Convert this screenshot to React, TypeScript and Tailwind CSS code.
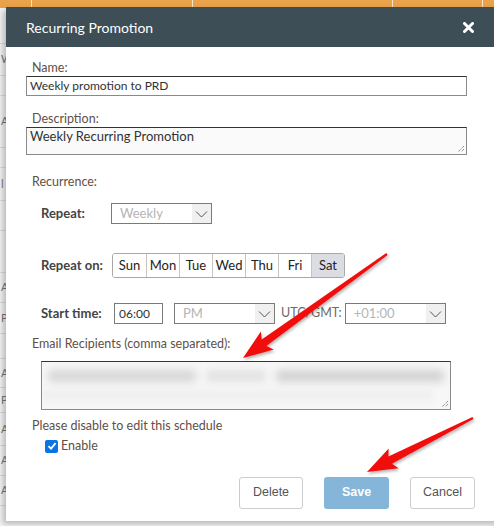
import React from 'react'

const font = { fontFamily: 'Lato, "Noto Sans", sans-serif' }

const DAYS = ['Sun', 'Mon', 'Tue', 'Wed', 'Thu', 'Fri', 'Sat']

// Rows of the grid sitting behind the dialog
const BG_ROWS = [
  { h: 36, t: '' },
  { h: 32, t: 'W' },
  { h: 20, t: '' },
  { h: 52, t: 'AI' },
  { h: 20, t: '' },
  { h: 33, t: 'l' },
  { h: 30, t: '' },
  { h: 42, t: '' },
  { h: 30, t: 'AI' },
  { h: 31, t: 'PI' },
  { h: 25, t: '' },
  { h: 29, t: 'AI' },
  { h: 25, t: 'PI' },
  { h: 33, t: 'AI' },
  { h: 30, t: 'AI' },
  { h: 30, t: 'AI' },
]

function Chevron() {
  return (
    <svg width="13" height="8" viewBox="0 0 13 8" fill="none">
      <path d="M1 1.5 L6.5 7 L12 1.5" stroke="#555" strokeWidth="1" />
    </svg>
  )
}

function Select({ value, width }: { value: string; width: string }) {
  return (
    <div className={`flex h-[21px] ${width} border border-[#7a7a7a] bg-white`}>
      <span className="flex-1 pl-[8px] text-[13px] leading-[19px] text-[#b5b5b5]">{value}</span>
      <span className="flex w-[19px] items-center justify-center bg-[#f0f0f0]">
        <Chevron />
      </span>
    </div>
  )
}

function Arrow({ tail, tip }: { tail: [number, number]; tip: [number, number] }) {
  const dx = tip[0] - tail[0]
  const dy = tip[1] - tail[1]
  const len = Math.hypot(dx, dy)
  const ux = dx / len
  const uy = dy / len
  const nx = -uy
  const ny = ux
  const headLen = 30
  const bx = tip[0] - ux * headLen
  const by = tip[1] - uy * headLen
  const p = (x: number, y: number) => `${x.toFixed(1)},${y.toFixed(1)}`
  const pts = [
    p(tail[0] + nx * 1.2, tail[1] + ny * 1.2),
    p(bx + ux * 4 + nx * 4, by + uy * 4 + ny * 4),
    p(bx + nx * 11, by + ny * 11),
    p(tip[0], tip[1]),
    p(bx - nx * 11, by - ny * 11),
    p(bx + ux * 4 - nx * 4, by + uy * 4 - ny * 4),
    p(tail[0] - nx * 1.2, tail[1] - ny * 1.2),
  ].join(' ')
  return <polygon points={pts} fill="#f20d0d" />
}

export default function App() {
  return (
    <div className="relative h-[526px] w-[494px] overflow-hidden bg-[#f4f4f4]" style={font}>
      {/* grid behind the dialog */}
      <div className="flex h-[8px] bg-[#eaa34a]">
        <div className="w-[32px] border-r border-white/70" />
        <div className="w-[161px] border-r border-white/70" />
        <div className="w-[200px] border-r border-white/70" />
        <div className="w-[90px] border-r border-white/70" />
      </div>
      <div className="flex flex-col">
        {BG_ROWS.map((r, i) => (
          <div
            key={i}
            className="flex items-center border-b border-[#dcdcdc] pl-[1px] text-[11px] text-[#777]"
            style={{ height: r.h }}
          >
            {r.t}
          </div>
        ))}
      </div>

      {/* dialog */}
      <div className="absolute left-[6px] top-[7px] h-[514px] w-[500px] bg-white shadow-[-3px_3px_6px_rgba(0,0,0,0.25)]">
        <div className="flex h-[40px] items-center justify-between bg-[#3d4e57] pl-[20px] pr-[32px]">
          <span className="text-[14px] text-white">Recurring Promotion</span>
          <svg width="11" height="11" viewBox="0 0 11 11">
            <path d="M1.5 1.5 L9.5 9.5 M9.5 1.5 L1.5 9.5" stroke="#fff" strokeWidth="3" strokeLinecap="round" />
          </svg>
        </div>

        <div className="flex w-[441px] flex-col pl-[20px] text-[#5f5046]">
          <label className="ml-[6px] mt-[14px] h-[14px] text-[12.5px] leading-[14px]">Name:</label>
          <div className="mt-[1px] h-[20px] w-[441px] border border-[#8a8a8a] border-t-[#333] pl-[3px] text-[12px] leading-[18px] text-[#333]">
            Weekly promotion to PRD
          </div>

          <label className="ml-[6px] mt-[16px] h-[14px] text-[12.5px] leading-[14px]">Description:</label>
          <div className="relative mt-[1px] h-[28px] w-[441px] border border-[#8a8a8a] border-t-[#333] bg-[#fafafa] pl-[3px] text-[13px] leading-[16px] text-[#333]">
            Weekly Recurring Promotion
            <svg className="absolute bottom-[1px] right-[1px]" width="9" height="9" viewBox="0 0 9 9">
              <path d="M8 2 L2 8 M8 5 L5 8" stroke="#666" strokeWidth="1" strokeDasharray="1 1" />
            </svg>
          </div>

          <label className="ml-[6px] mt-[20px] h-[14px] text-[12.5px] leading-[14px]">Recurrence:</label>

          <div className="ml-[15px] mt-[14px] flex items-center">
            <span className="w-[70px] text-[13px] font-bold text-[#444]">Repeat:</span>
            <Select value="Weekly" width="w-[101px]" />
          </div>

          <div className="ml-[15px] mt-[29px] flex items-center">
            <span className="w-[71px] text-[13px] font-bold text-[#444]">Repeat on:</span>
            <div className="flex h-[25px] overflow-hidden rounded-[3px] border border-[#a8a8a8]">
              {DAYS.map((d, i) => (
                <span
                  key={d}
                  className={`flex w-[33px] items-center justify-center text-[13px] text-[#222] ${
                    i > 0 ? 'border-l border-[#c4c4c4]' : ''
                  } ${d === 'Sat' ? 'bg-[#dcdde2]' : 'bg-white'}`}
                >
                  {d}
                </span>
              ))}
            </div>
          </div>

          <div className="ml-[15px] mt-[25px] flex items-center">
            <span className="w-[73px] text-[13px] font-bold text-[#444]">Start time:</span>
            <div className="h-[21px] w-[49px] border border-[#7a7a7a] pl-[4px] text-[12px] leading-[19px] text-[#333]">
              06:00
            </div>
            <div className="ml-[11px]">
              <Select value="PM" width="w-[101px]" />
            </div>
            <span className="ml-[6px] text-[12.5px] text-[#6a6a6a]">UTC/GMT:</span>
            <div className="ml-[3px]">
              <Select value="+01:00" width="w-[101px]" />
            </div>
          </div>

          <label className="ml-[6px] mt-[13px] h-[14px] text-[12.5px] leading-[14px]">
            Email Recipients (comma separated):
          </label>
          <div className="relative ml-[15px] mt-[10px] h-[49px] w-[410px] overflow-hidden border border-[#8a8a8a] border-t-[#333] bg-[#f7f7f7]">
            <div className="flex gap-[10px] px-[6px] pt-[8px]">
              <div className="h-[12px] w-[150px] rounded bg-[#d6d6d6] blur-[4px]" />
              <div className="h-[12px] w-[60px] rounded bg-[#e2e2e2] blur-[4px]" />
              <div className="h-[12px] w-[170px] rounded bg-[#d2d2d2] blur-[4px]" />
            </div>
            <div className="mt-[8px] h-[10px] w-[390px] bg-[#efefef] blur-[3px]" />
            <svg className="absolute bottom-[1px] right-[1px]" width="9" height="9" viewBox="0 0 9 9">
              <path d="M8 2 L2 8 M8 5 L5 8" stroke="#666" strokeWidth="1" strokeDasharray="1 1" />
            </svg>
          </div>

          <label className="ml-[6px] mt-[9px] h-[14px] text-[12.5px] leading-[14px]">
            Please disable to edit this schedule
          </label>
          <div className="ml-[19px] mt-[4px] flex items-center gap-[3px]">
            <span className="flex h-[13px] w-[13px] items-center justify-center rounded-[2px] bg-[#0b74e5]">
              <svg width="10" height="10" viewBox="0 0 10 10">
                <path d="M1.5 5.2 L4 7.6 L8.6 2.2" stroke="#fff" strokeWidth="1.8" fill="none" />
              </svg>
            </span>
            <span className="text-[12.5px]">Enable</span>
          </div>

          <div
            className="ml-[213px] mt-[21px] flex gap-[21px] text-[12.5px]"
            style={{ fontFamily: '"Liberation Sans", Arial, sans-serif' }}
          >
            <button className="h-[32px] w-[64px] shrink-0 rounded-[3px] border border-[#ccc] bg-white text-[#555]">
              Delete
            </button>
            <button className="h-[32px] w-[65px] shrink-0 rounded-[3px] bg-[#85b6da] font-bold text-white">
              Save
            </button>
            <button className="h-[32px] w-[65px] shrink-0 rounded-[3px] border border-[#ccc] bg-white text-[#555]">
              Cancel
            </button>
          </div>
        </div>
      </div>

      {/* annotation arrows */}
      <svg className="pointer-events-none absolute left-0 top-0" width="494" height="526">
        <defs>
          <filter id="arrowShadow" x="-10%" y="-10%" width="130%" height="130%">
            <feDropShadow dx="1" dy="2" stdDeviation="1.5" floodColor="#000" floodOpacity="0.3" />
          </filter>
        </defs>
        <g filter="url(#arrowShadow)">
          <Arrow tail={[387, 254]} tip={[243, 358]} />
          <Arrow tail={[473, 418]} tip={[367, 472]} />
        </g>
      </svg>
    </div>
  )
}
